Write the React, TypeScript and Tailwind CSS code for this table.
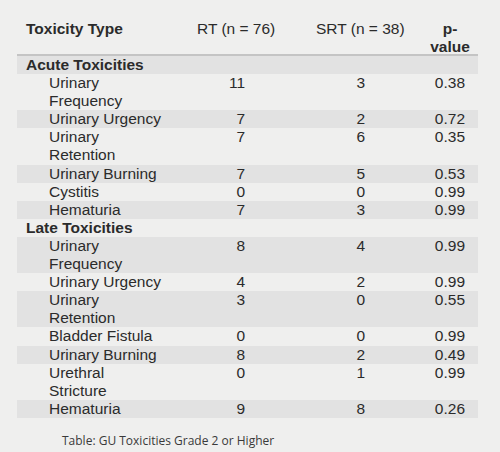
import React from 'react';

type Row = { label: string; rt?: string; srt?: string; p?: string; section?: boolean };

const rows: Row[] = [
  { label: 'Acute Toxicities', section: true },
  { label: 'Urinary Frequency', rt: '11', srt: '3', p: '0.38' },
  { label: 'Urinary Urgency', rt: '7', srt: '2', p: '0.72' },
  { label: 'Urinary Retention', rt: '7', srt: '6', p: '0.35' },
  { label: 'Urinary Burning', rt: '7', srt: '5', p: '0.53' },
  { label: 'Cystitis', rt: '0', srt: '0', p: '0.99' },
  { label: 'Hematuria', rt: '7', srt: '3', p: '0.99' },
  { label: 'Late Toxicities', section: true },
  { label: 'Urinary Frequency', rt: '8', srt: '4', p: '0.99' },
  { label: 'Urinary Urgency', rt: '4', srt: '2', p: '0.99' },
  { label: 'Urinary Retention', rt: '3', srt: '0', p: '0.55' },
  { label: 'Bladder Fistula', rt: '0', srt: '0', p: '0.99' },
  { label: 'Urinary Burning', rt: '8', srt: '2', p: '0.49' },
  { label: 'Urethral Stricture', rt: '0', srt: '1', p: '0.99' },
  { label: 'Hematuria', rt: '9', srt: '8', p: '0.26' },
];

const cols = 'grid grid-cols-[160px_110px_120px_71px]';

const App = () => {
  return (
    <div className="w-[500px] h-[452px] bg-[#efefee] overflow-hidden pt-[20px] pl-[17px] font-['Liberation_Sans',Arial,sans-serif] text-[15.5px] leading-[18.1px] text-[#2b2b2b]">
      <div className="w-[461px]">
        {/* header */}
        <div className={`${cols} border-b-2 border-[#c4c4c4] h-[36px]`}>
          <div className="pl-[9px] font-bold">Toxicity Type</div>
          <div className="pl-[20px] whitespace-nowrap">RT (n = 76)</div>
          <div className="pl-[29px] whitespace-nowrap">SRT (n = 38)</div>
          <div className="pl-[15px] text-center font-bold">
            p-
            <br />
            value
          </div>
        </div>

        {rows.map((r, i) => (
          <div key={i} className={`${cols} ${i % 2 === 0 ? 'bg-[#e2e2e2]' : ''}`}>
            {r.section ? (
              <div className="pl-[9px] font-bold whitespace-nowrap">{r.label}</div>
            ) : (
              <div className="pl-[32px] pr-[12px]">{r.label}</div>
            )}
            <div className="pr-[42px] text-right">{r.rt}</div>
            <div className="pr-[42px] text-right">{r.srt}</div>
            <div className="pr-[13px] text-right">{r.p}</div>
          </div>
        ))}
      </div>

      <p className="mt-[15px] pl-[45px] font-['Open_Sans',sans-serif] text-[12px] leading-[16px] text-[#3a3a3a]">
        Table: GU Toxicities Grade 2 or Higher
      </p>
    </div>
  );
};

export default App;
